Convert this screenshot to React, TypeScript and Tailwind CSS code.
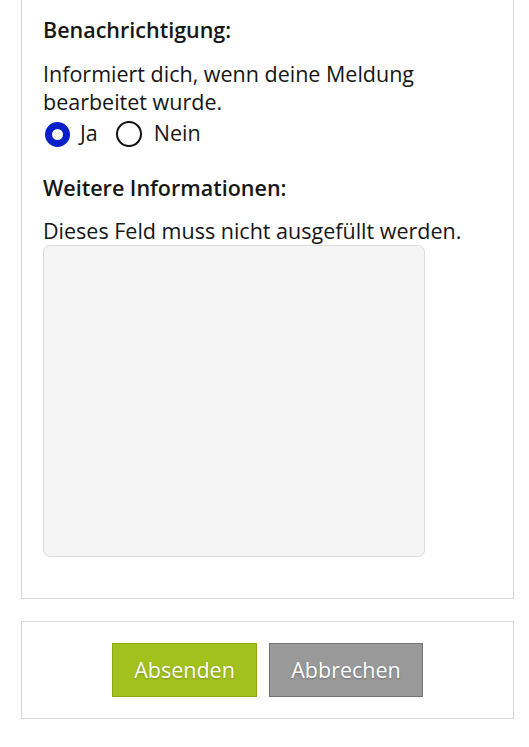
import React from "react";

export default function App() {
  return (
    <div className="min-h-[747px] w-[529px] bg-white text-[#161616]" style={{ fontFamily: '"Open Sans", "Noto Sans", sans-serif' }}>
      <div className="ml-[21px] w-[493px] border border-t-0 border-[#d6d6d6] pl-[21px] pt-[16px] pb-[41px]">
        <div className="text-[21.5px] leading-[28px] font-semibold">Benachrichtigung:</div>
        <div className="mt-[16px] text-[21.5px] leading-[28px]">
          Informiert dich, wenn deine Meldung
          <br />
          bearbeitet wurde.
        </div>
        <div className="mt-[3px] flex items-center text-[21.5px] leading-[28px]">
          <span className="ml-[2px] mt-[2px] inline-block h-[25px] w-[25px] rounded-full border-[7px] border-[#0a20c8] bg-white" />
          <span className="ml-[10px]">Ja</span>
          <span className="ml-[18px] mt-[2px] inline-block h-[26px] w-[26px] rounded-full border-[2.5px] border-[#111] bg-white" />
          <span className="ml-[12px]">Nein</span>
        </div>
        <div className="mt-[27px] text-[21.5px] leading-[28px] font-semibold">Weitere Informationen:</div>
        <div className="mt-[16px] text-[21.5px] leading-[26px]">Dieses Feld muss nicht ausgefüllt werden.</div>
        <div className="mt-[1px] h-[312px] w-[382px] rounded-[7px] border border-[#dcdcdc] bg-[#f5f5f5]" />
      </div>
      <div className="mt-[22px] ml-[21px] flex h-[98px] w-[493px] items-center justify-center gap-[12px] border border-[#d6d6d6]">
        <button className="h-[54px] w-[145px] border border-[#8ea816] bg-[#a3c11d] text-[21.5px] text-white" style={{ textShadow: "0 1px 2px rgba(0,0,0,0.25)" }}>
          Absenden
        </button>
        <button className="h-[54px] w-[154px] border border-[#727272] bg-[#999999] text-[21.5px] text-white" style={{ textShadow: "0 1px 2px rgba(0,0,0,0.3)" }}>
          Abbrechen
        </button>
      </div>
    </div>
  );
}
